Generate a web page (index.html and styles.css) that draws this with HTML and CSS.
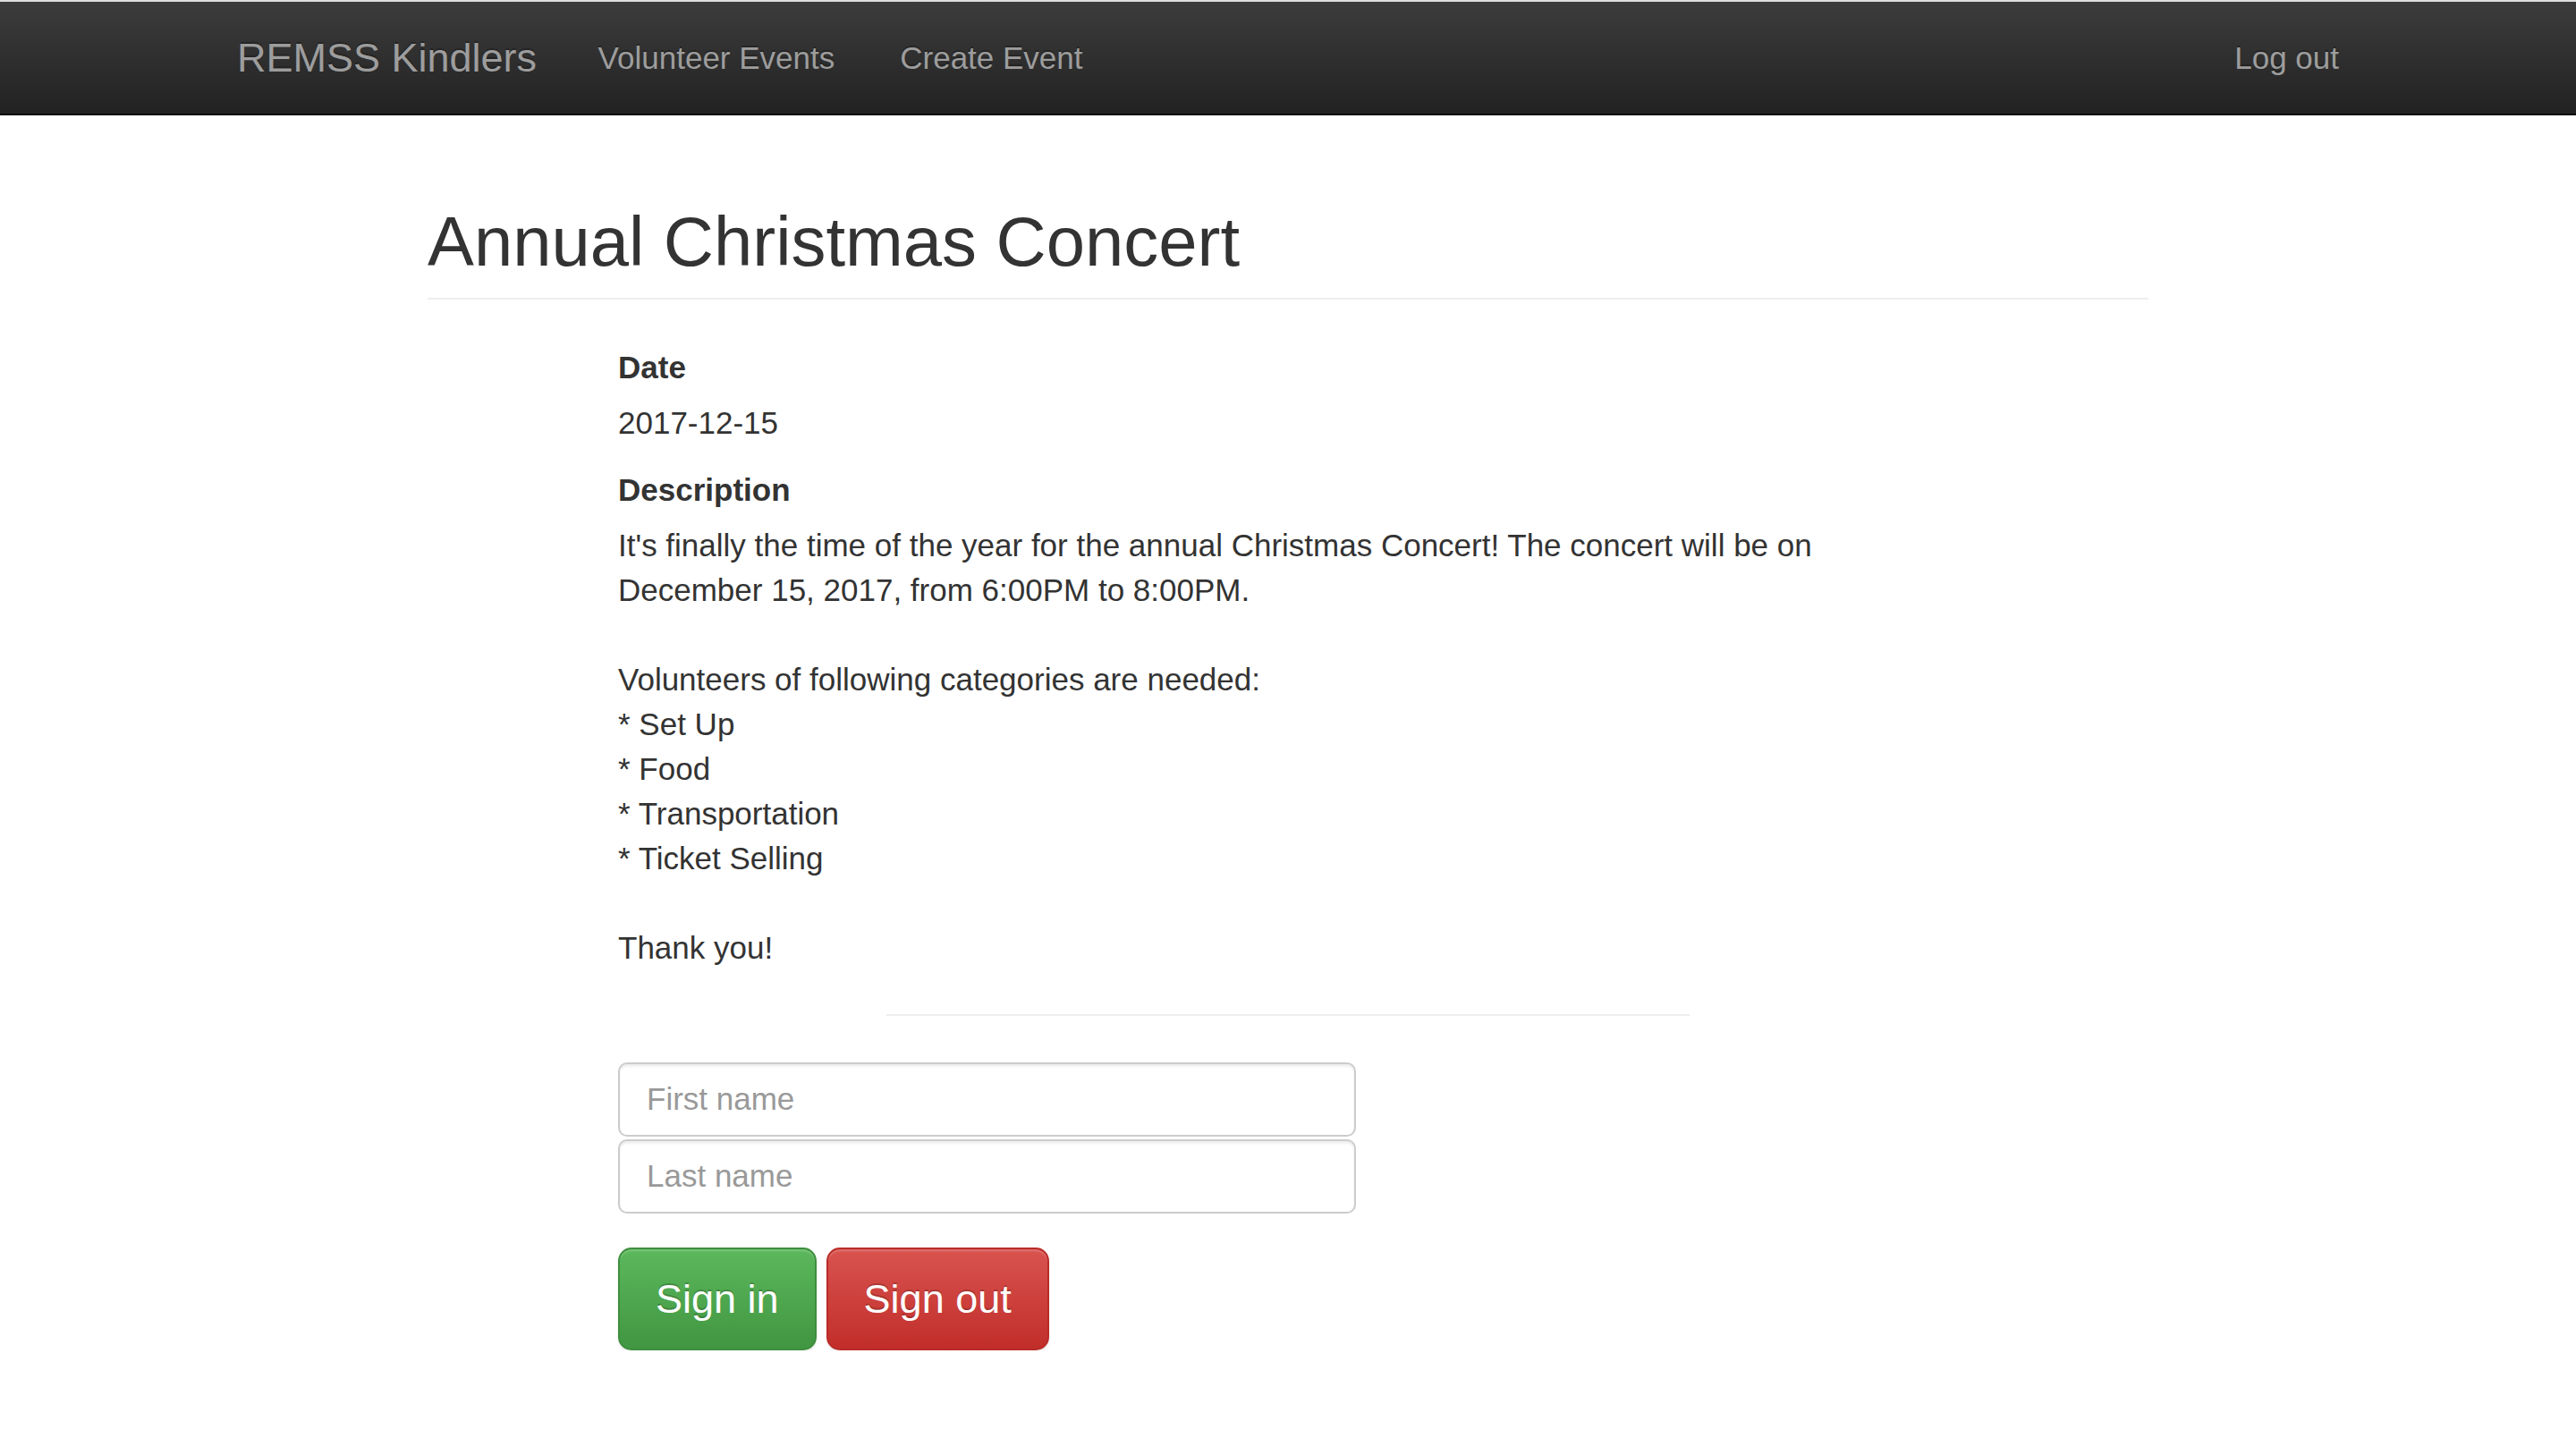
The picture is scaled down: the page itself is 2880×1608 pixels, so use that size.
FILE: index.html
```html
<!DOCTYPE html>
<html lang="en">
<head>
<meta charset="utf-8">
<title>Annual Christmas Concert</title>
<link rel="stylesheet" href="styles.css">
</head>
<body>
<nav class="navbar">
  <div class="nav-container">
    <a class="brand" href="#">REMSS Kindlers</a>
    <ul class="nav-links">
      <li><a href="#">Volunteer Events</a></li>
      <li><a href="#">Create Event</a></li>
    </ul>
    <ul class="nav-links nav-right">
      <li><a href="#">Log out</a></li>
    </ul>
  </div>
</nav>
<main class="page">
  <div class="page-header"><h1>Annual Christmas Concert</h1></div>
  <section class="event">
    <div class="field-label">Date</div>
    <p class="field-value">2017-12-15</p>
    <div class="field-label">Description</div>
    <p class="description">It's finally the time of the year for the annual Christmas Concert! The concert will be on December 15, 2017, from 6:00PM to 8:00PM.

Volunteers of following categories are needed:
* Set Up
* Food
* Transportation
* Ticket Selling

Thank you!</p>
    <hr class="divider">
    <form class="signin">
      <input class="form-control" type="text" placeholder="First name">
      <input class="form-control second" type="text" placeholder="Last name">
      <div class="actions">
        <button type="button" class="btn btn-success">Sign in</button>
        <button type="button" class="btn btn-danger">Sign out</button>
      </div>
    </form>
  </section>
</main>
</body>
</html>
```
FILE: styles.css
```css
html, body {
  margin: 0;
  padding: 0;
  background: #fff;
}
body {
  font-family: "Liberation Sans", Arial, Helvetica, sans-serif;
  font-size: 35px;
  line-height: 50px;
  color: #333;
}
a { text-decoration: none; }

.navbar {
  border-top: 2px solid #dedede;
  border-bottom: 2.5px solid #080808;
  background-image: linear-gradient(to bottom, #3c3c3c 0, #222 100%);
}
.nav-container {
  width: 2425px;
  margin: 0 auto;
  padding: 0 37.5px;
  box-sizing: border-box;
  display: flex;
  align-items: stretch;
  height: 125px;
}
.brand {
  margin-left: -37.5px;
  padding: 0 32px 0 37.5px;
  font-size: 45px;
  line-height: 125px;
  color: #9d9d9d;
  text-shadow: 0 -2px 0 rgba(0,0,0,.25);
}
.nav-links {
  list-style: none;
  margin: 0;
  padding: 0;
  display: flex;
}
.nav-links a {
  display: block;
  padding: 0 36.5px;
  line-height: 125px;
  font-size: 35px;
  color: #9d9d9d;
  text-shadow: 0 -2px 0 rgba(0,0,0,.25);
}
.nav-right {
  margin-left: auto;
  margin-right: -37.5px;
}
.nav-right a {
  padding: 0 37.5px;
}

.page {
  width: 1924px;
  margin: 0 auto;
}
.page-header {
  margin-top: 99px;
  padding-bottom: 19px;
  border-bottom: 2px solid #eee;
}
.page-header h1 {
  margin: 0;
  font-size: 77.8px;
  line-height: 1.1;
  font-weight: 500;
  color: #333;
}

.event {
  width: 1498px;
  margin: 51px 0 0 213px;
}
.field-label {
  font-weight: 700;
  margin-bottom: 12px;
}
.field-value {
  margin: 0 0 25px;
}
.description {
  margin: 0;
  white-space: pre-line;
}
.divider {
  width: 898px;
  border: 0;
  border-top: 2px solid #eee;
  margin: 49px auto 52px;
}

.form-control {
  display: block;
  box-sizing: border-box;
  width: 825px;
  height: 83px;
  padding: 15px 30px;
  margin: 0;
  font-family: inherit;
  font-size: 35px;
  color: #555;
  background: #fff;
  border: 2px solid #ccc;
  border-radius: 10px;
  box-shadow: inset 0 2.5px 2.5px rgba(0,0,0,.075);
  outline: none;
}
.form-control::placeholder { color: #999; }
.form-control.second { margin-top: 3px; }

.actions {
  display: flex;
  gap: 11px;
  margin-top: 38px;
}
.btn {
  font-family: inherit;
  font-size: 45px;
  line-height: 61px;
  padding: 25px 40px;
  border: 2px solid transparent;
  border-radius: 15px;
  color: #fff;
  cursor: pointer;
  text-shadow: 0 -2px 0 rgba(0,0,0,.2);
  box-shadow: inset 0 2.5px 0 rgba(255,255,255,.15), 0 2.5px 2.5px rgba(0,0,0,.075);
}
.btn-success {
  background-image: linear-gradient(to bottom, #5cb85c 0, #419641 100%);
  border-color: #3e8f3e;
}
.btn-danger {
  background-image: linear-gradient(to bottom, #d9534f 0, #c12e2a 100%);
  border-color: #b92c28;
}
```
